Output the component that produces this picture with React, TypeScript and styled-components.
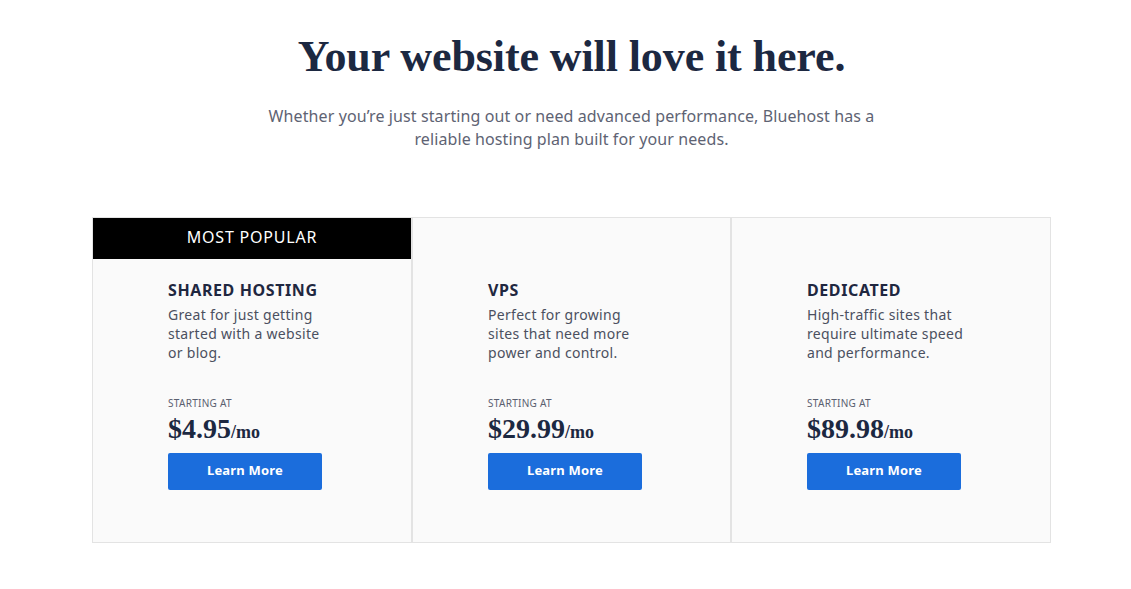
import React from 'react';
import styled, { createGlobalStyle } from 'styled-components';

const GlobalStyle = createGlobalStyle`
  * {
    box-sizing: border-box;
  }

  body {
    margin: 0;
    background: #ffffff;
    font-family: 'Noto Sans', 'DejaVu Sans', sans-serif;
  }
`;

const Section = styled.section`
  display: flex;
  flex-direction: column;
  align-items: center;
  padding: 32px 0 46px 12px;
`;

const Heading = styled.h1`
  margin: 0;
  font-family: 'Liberation Serif', 'DejaVu Serif', serif;
  font-weight: 700;
  font-size: 44px;
  line-height: 50px;
  color: #1c2841;
  letter-spacing: -0.1px;
`;

const Intro = styled.p`
  margin: 23px 0 0;
  width: 630px;
  text-align: center;
  font-size: 16px;
  line-height: 23px;
  letter-spacing: 0.1px;
  color: #5e6373;
`;

const Plans = styled.div`
  display: grid;
  grid-template-columns: 320px 319px 320px;
  margin-top: 66px;
`;

const Plan = styled.div`
  position: relative;
  height: 326px;
  background: #fafafa;
  border: 1px solid #e3e3e3;
  padding: 62px 20px 0 75px;
`;

const Badge = styled.div`
  position: absolute;
  top: 0;
  left: 0;
  right: 0;
  height: 41px;
  padding-bottom: 3px;
  background: #000000;
  color: #ffffff;
  display: flex;
  align-items: center;
  justify-content: center;
  font-size: 16px;
  letter-spacing: 0.8px;
`;

const PlanName = styled.h3`
  margin: 0;
  font-size: 16px;
  line-height: 20px;
  font-weight: 700;
  color: #1f2740;
  letter-spacing: 0.6px;
`;

const PlanText = styled.p`
  margin: 5px 0 0;
  width: 168px;
  font-size: 14px;
  line-height: 19px;
  letter-spacing: 0.3px;
  color: #4b5060;
`;

const Starting = styled.div`
  margin-top: 35px;
  font-size: 10px;
  line-height: 12px;
  letter-spacing: 0.3px;
  color: #5b6070;
  text-transform: uppercase;
`;

const Price = styled.div`
  margin-top: 5px;
  font-family: 'Liberation Serif', 'DejaVu Serif', serif;
  font-weight: 700;
  font-size: 28px;
  line-height: 30px;
  color: #1c2841;
`;

const Per = styled.span`
  font-size: 18px;
`;

const LearnButton = styled.button`
  display: block;
  margin-top: 6px;
  width: 154px;
  height: 37px;
  padding: 0 0 3px;
  border: none;
  border-radius: 2px;
  background: #1b6ddc;
  color: #ffffff;
  font-family: inherit;
  font-size: 13px;
  font-weight: 700;
  letter-spacing: 0.2px;
  cursor: pointer;
`;

const plans = [
  {
    name: 'Shared Hosting',
    text: 'Great for just getting started with a website or blog.',
    price: '$4.95',
    popular: true,
  },
  {
    name: 'VPS',
    text: 'Perfect for growing sites that need more power and control.',
    price: '$29.99',
  },
  {
    name: 'Dedicated',
    text: 'High-traffic sites that require ultimate speed and performance.',
    price: '$89.98',
  },
];

export default function App() {
  return (
    <>
      <GlobalStyle />
      <Section>
        <Heading>Your website will love it here.</Heading>
        <Intro>
          Whether you’re just starting out or need advanced performance, Bluehost has a
          reliable hosting plan built for your needs.
        </Intro>
        <Plans>
          {plans.map((plan) => (
            <Plan key={plan.name}>
              {plan.popular && <Badge>MOST POPULAR</Badge>}
              <PlanName>{plan.name.toUpperCase()}</PlanName>
              <PlanText>{plan.text}</PlanText>
              <Starting>Starting at</Starting>
              <Price>
                {plan.price}
                <Per>/mo</Per>
              </Price>
              <LearnButton>Learn More</LearnButton>
            </Plan>
          ))}
        </Plans>
      </Section>
    </>
  );
}
